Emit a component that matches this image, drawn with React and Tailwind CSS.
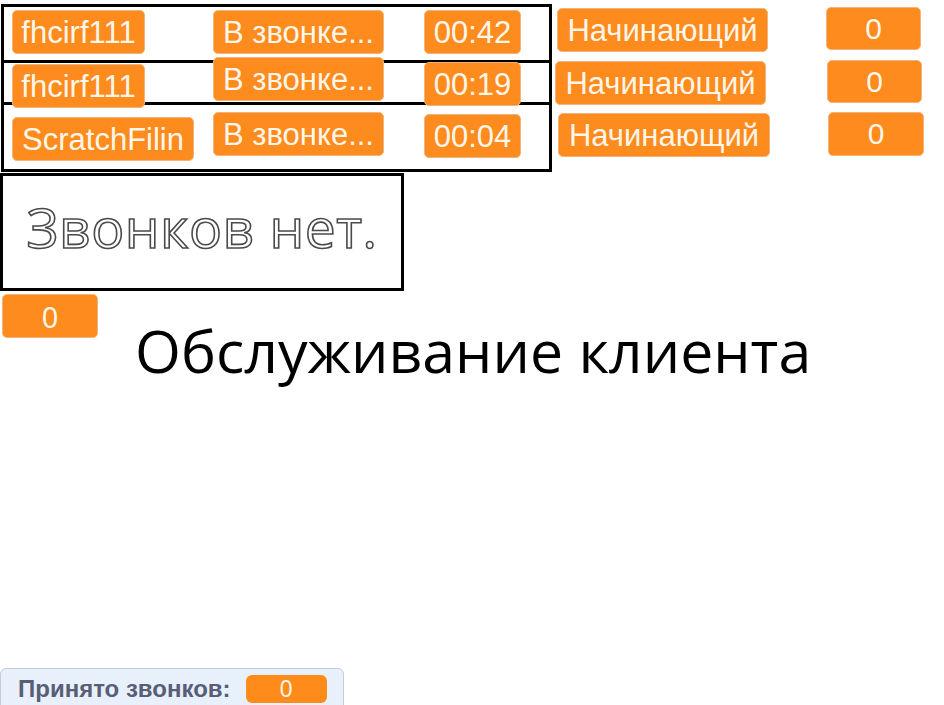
import React from "react";

const badge =
  "absolute flex items-center justify-center rounded-[5px] bg-[#fd8b1d] border border-[#f2b47c] text-[#fff6ea] leading-none";
const sans = { fontFamily: '"Liberation Sans", Arial, sans-serif' };

function B({ x, y, w, h = 44, children, size = "text-[31px]" }) {
  return (
    <div
      className={`${badge} ${size}`}
      style={{ left: x, top: y, width: w, height: h, ...sans }}
    >
      {children}
    </div>
  );
}

export default function App() {
  return (
    <div className="relative w-[944px] h-[705px] overflow-hidden bg-white">
      {/* table frame */}
      <div className="absolute left-[1px] top-[4px] w-[551px] h-[168px] border-[3px] border-black flex flex-col">
        <div className="h-[56px] border-b-[3px] border-black" />
        <div className="h-[42px] border-b-[3px] border-black" />
        <div className="flex-1" />
      </div>

      {/* row 1 */}
      <B x={12} y={10} w={133}>fhcirf111</B>
      <B x={213} y={10} w={171}>В звонке...</B>
      <B x={424} y={10} w={97}>00:42</B>
      <B x={557} y={8} w={211}>Начинающий</B>
      <B x={826} y={7} w={95} h={43} size="text-[30px]">0</B>

      {/* row 2 */}
      <B x={12} y={64} w={133}>fhcirf111</B>
      <B x={213} y={57} w={171}>В звонке...</B>
      <B x={424} y={62} w={97}>00:19</B>
      <B x={555} y={61} w={211}>Начинающий</B>
      <B x={827} y={60} w={95} h={43} size="text-[30px]">0</B>

      {/* row 3 */}
      <B x={12} y={117} w={182}>ScratchFilin</B>
      <B x={213} y={112} w={171}>В звонке...</B>
      <B x={424} y={114} w={97}>00:04</B>
      <B x={558} y={113} w={212}>Начинающий</B>
      <B x={828} y={112} w={96} h={44} size="text-[30px]">0</B>

      {/* no calls box */}
      <div className="absolute left-0 top-[173px] w-[404px] h-[118px] border-[3px] border-black flex items-center justify-center">
        <span
          className="text-[55px] leading-none text-white tracking-[0.5px] pb-[12px]"
          style={{
            fontFamily: '"Open Sans", "Noto Sans", sans-serif',
            WebkitTextStroke: "1.6px #4a4a4a",
          }}
        >
          Звонков нет.
        </span>
      </div>

      <div
        className="absolute left-[2px] top-[294px] w-[96px] h-[44px] rounded-[5px] bg-[#fd8b1d] border border-[#f2b47c] flex items-center justify-center text-[#fff6ea] text-[29px] leading-none"
        style={{ fontFamily: '"Noto Sans", "Open Sans", sans-serif' }}
      >
        0
      </div>

      {/* heading */}
      <div
        className="absolute left-[135px] top-[321px] text-[59px] leading-none text-black whitespace-nowrap"
        style={{ fontFamily: '"Open Sans", "Noto Sans", sans-serif' }}
      >
        Обслуживание клиента
      </div>

      {/* monitor */}
      <div className="absolute left-0 top-[668px] w-[344px] h-[50px] rounded-[6px] bg-[#e8f0fb] border border-[#c3ccd9] flex items-start pt-[6px] pl-[17px] gap-[15px]">
        <span
          className="text-[24px] font-bold text-[#575e75] leading-[28px]"
          style={{ fontFamily: '"Liberation Sans", Arial, sans-serif' }}
        >
          Принято звонков:
        </span>
        <span
          className="w-[81px] h-[28px] rounded-[6px] bg-[#ff8c1a] text-[#fff6ea] text-[23px] flex items-center justify-center leading-none"
          style={{ fontFamily: '"Liberation Sans", Arial, sans-serif' }}
        >
          0
        </span>
      </div>
    </div>
  );
}
